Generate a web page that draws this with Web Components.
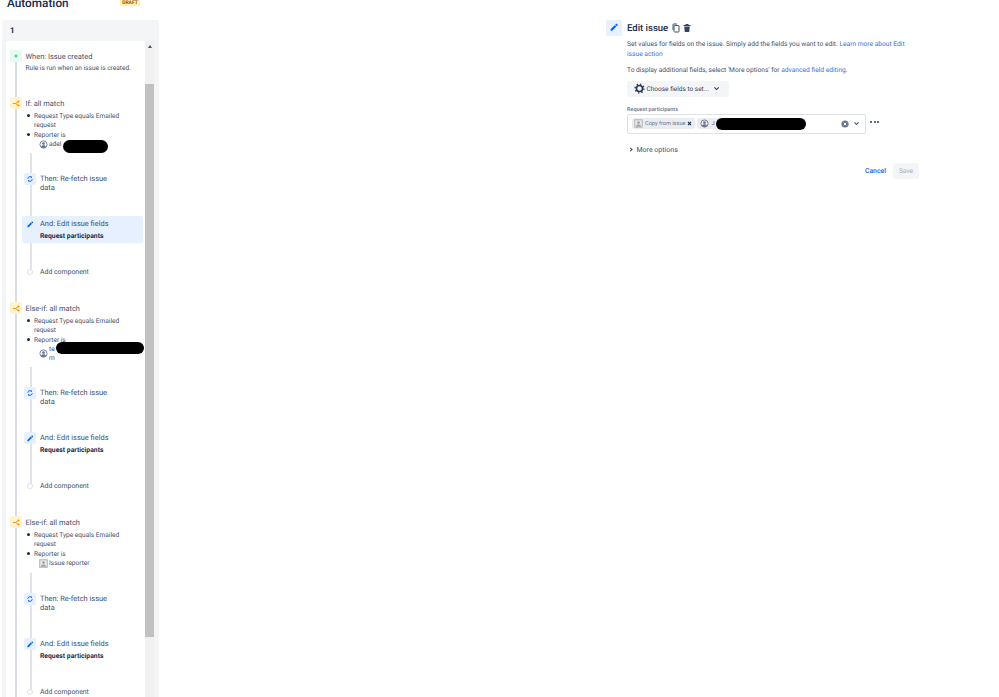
<!DOCTYPE html>
<html>
<head>
<meta charset="utf-8">
<title>Automation</title>
<style>
  html, body { margin: 0; height: 100%; overflow: hidden; background: #fff; }
  body { font-family: Roboto, "Noto Sans", sans-serif; color: #42526e; text-rendering: geometricPrecision; }
</style>
</head>
<body>
<automation-app>
  <rule-panel slot="rule">
    <rule-step kind="trigger" title="When: Issue created" h="47">Rule is run when an issue is created.</rule-step>
    <rule-step kind="branch" title="If: all match" h="62">
      <rule-cond>Request Type equals Emailed request</rule-cond>
      <rule-cond>Reporter is<rule-user>adel</rule-user><black-out style="left:37px;top:9px;width:45px;height:13px"></black-out></rule-cond>
    </rule-step>
    <rule-block>
      <rule-action kind="refetch" title="Then: Re-fetch issue data"></rule-action>
      <rule-action kind="edit" selected title="And: Edit issue fields">Request participants</rule-action>
      <rule-add></rule-add>
    </rule-block>
    <rule-step kind="branch" title="Else-if: all match" h="71">
      <rule-cond>Request Type equals Emailed request</rule-cond>
      <rule-cond>Reporter is<rule-user>te<br>m</rule-user><black-out style="left:30px;top:6px;width:88px;height:12px"></black-out></rule-cond>
    </rule-step>
    <rule-block>
      <rule-action kind="refetch" title="Then: Re-fetch issue data"></rule-action>
      <rule-action kind="edit" title="And: Edit issue fields">Request participants</rule-action>
      <rule-add></rule-add>
    </rule-block>
    <rule-step kind="branch" title="Else-if: all match" h="63">
      <rule-cond>Request Type equals Emailed request</rule-cond>
      <rule-cond>Reporter is<rule-user field>Issue reporter</rule-user></rule-cond>
    </rule-step>
    <rule-block>
      <rule-action kind="refetch" title="Then: Re-fetch issue data"></rule-action>
      <rule-action kind="edit" title="And: Edit issue fields">Request participants</rule-action>
      <rule-add></rule-add>
    </rule-block>
  </rule-panel>
  <edit-form slot="form"></edit-form>
</automation-app>

<script>
// icons used in more than one element
const ICONS = {
  pencil: '<path d="M3 13.2V16h2.8l7.6-7.6-2.8-2.8L3 13.2zM14.3 7.5l1.3-1.3a1 1 0 0 0 0-1.4l-1.4-1.4a1 1 0 0 0-1.4 0l-1.3 1.3 2.8 2.8z" fill="currentColor"/>',
  refetch: '<path d="M4.5 9.5a5.5 5.5 0 0 1 9-4.2M15.5 10.5a5.5 5.5 0 0 1-9 4.2" fill="none" stroke="currentColor" stroke-width="2.4"/><path d="M15 2.500v4.500h-4.500zM5 17.500V13h4.500z" fill="currentColor"/>',
  branch: '<path d="M2 10h6M8 10l5-4M8 10l5 4" fill="none" stroke="currentColor" stroke-width="2.200"/><circle cx="14.500" cy="5.600" r="2.200" fill="currentColor"/><circle cx="14.500" cy="14.400" r="2.200" fill="currentColor"/>',
  plus: '<path d="M10 5v10M5 10h10" stroke="currentColor" stroke-width="3.500" fill="none"/>',
  user: '<circle cx="10" cy="10" r="8" fill="none" stroke="currentColor" stroke-width="2"/><circle cx="10" cy="8" r="3" fill="currentColor"/><path d="M4.5 15.5c1-3 3-3.800 5.500-3.800s4.500.8 5.500 3.800a8 8 0 0 1-11 0z" fill="currentColor"/>',
  portrait: '<rect width="20" height="20" rx="2" fill="#c4c4c4"/><rect x="3" y="3" width="14" height="14" fill="#e8e8e8"/><circle cx="10" cy="8" r="3" fill="#a5a5a5"/><path d="M4 17c.5-4 3-5 6-5s5.500 1 6 5z" fill="#a5a5a5"/>'
};
const svg = (name, size) => `<svg viewBox="0 0 20 20" width="${size}" height="${size}">${ICONS[name]}</svg>`;

class AutomationApp extends HTMLElement {
  constructor() {
    super();
    this.attachShadow({ mode: 'open' }).innerHTML = `
      <style>
        :host { display: grid; grid-template-columns: 159px 1fr; height: 697px; overflow: hidden; }
        header { height: 20px; padding-left: 7px; display: flex; justify-content: space-between; width: 133px; }
        h1 { margin: -7px 0 0; font-size: 11.800px; line-height: 20px; font-weight: 500; color: #172b4d; }
        .draft { width: 20px; height: 6px; background: #fff0b3; color: #974f0c; text-align: center; font: 700 5px/6px Roboto, sans-serif; }
        .right { padding: 19px 0 0 447px; }
      </style>
      <div>
        <header><h1>Automation</h1><span class="draft">DRAFT</span></header>
        <slot name="rule"></slot>
      </div>
      <div class="right"><slot name="form"></slot></div>`;
  }
}

class RulePanel extends HTMLElement {
  constructor() {
    super();
    this.attachShadow({ mode: 'open' }).innerHTML = `
      <style>
        :host { display: block; margin-left: 2px; width: 157px; height: 677px; background: #f4f5f7; border-radius: 3px 3px 0 0; overflow: hidden; }
        .num { height: 21px; padding: 3px 0 0 8px; box-sizing: border-box; font: 700 8px/15px Roboto, sans-serif; color: #172b4d; }
        .box { margin-left: 4px; width: 148px; height: 656px; background: #fff; display: grid; grid-template-columns: minmax(0, 1fr) 9px; overflow: hidden; }
        .list { padding-top: 9px; height: 900px; background: linear-gradient(#d9dce1, #d9dce1) no-repeat 9px 20px / 2px 100%; }
        .bar { background: #f1f1f1; display: flex; flex-direction: column; }
        .bar i { height: 43px; width: 100%; flex: none; display: flex; justify-content: center; padding-top: 4px; box-sizing: border-box; }
        .bar i::before { content: ""; border: 2.500px solid transparent; border-top: 0; border-bottom: 3px solid #505050; height: 0; }
        .bar b { width: 100%; height: 553px; flex: none; background: #c1c1c1; }
      </style>
      <div class="num">1</div>
      <div class="box">
        <div class="list"><slot></slot></div>
        <div class="bar"><i></i><b></b></div>
      </div>`;
  }
}

// top level step of the rule: coloured icon, title, then its detail
class RuleStep extends HTMLElement {
  constructor() {
    super();
    this.attachShadow({ mode: 'open' });
  }
  connectedCallback() {
    const trigger = this.getAttribute('kind') === 'trigger';
    this.shadowRoot.innerHTML = `
      <style>
        :host { display: block; height: ${this.getAttribute('h')}px; }
        .head { display: flex; align-items: center; gap: 3.500px; height: 12px; padding-left: 4px; font-size: 7.450px; color: #42526e; white-space: nowrap; }
        .ic { width: 12px; height: 12px; border-radius: 2px; display: grid; place-items: center; background: ${trigger ? '#e3fcef' : '#fff4d1'}; color: ${trigger ? '#36b37e' : '#ff8b00'}; }
        .ic svg { display: block; }
        .body { padding: ${trigger ? '2px' : '2.500px'} 0 0 19.500px; font-size: 6.550px; line-height: 9px; color: #42526e; white-space: nowrap; }
      </style>
      <div class="head"><span class="ic">${svg(trigger ? 'plus' : 'branch', trigger ? 6 : 9)}</span><span>${this.getAttribute('title')}</span></div>
      <div class="body"><slot></slot></div>`;
  }
}

class RuleCond extends HTMLElement {
  constructor() {
    super();
    this.attachShadow({ mode: 'open' }).innerHTML = `
      <style>
        :host { display: block; position: relative; width: 92px; padding-left: 8.500px; margin-bottom: 1px; line-height: 9px; white-space: normal; }
        :host::before { content: ""; position: absolute; left: 1.500px; top: 2.500px; width: 3px; height: 3px; border-radius: 50%; background: #172b4d; }
      </style>
      <slot></slot>`;
  }
}

class RuleUser extends HTMLElement {
  constructor() {
    super();
    this.attachShadow({ mode: 'open' });
  }
  connectedCallback() {
    const icon = this.hasAttribute('field') ? svg('portrait', 9) : svg('user', 9);
    this.shadowRoot.innerHTML = `
      <style>
        :host { display: flex; align-items: center; gap: 1.500px; padding-left: 4.500px; }
        svg { display: block; color: #6b778c; flex: none; }
      </style>
      ${icon}<span><slot></slot></span>`;
  }
}

// redaction scribble lying over the text
class BlackOut extends HTMLElement {
  constructor() {
    super();
    this.attachShadow({ mode: 'open' }).innerHTML = `
      <style>:host { display: block; position: absolute; background: #000; border-radius: 7px; }</style>`;
  }
}

class RuleBlock extends HTMLElement {
  constructor() {
    super();
    this.attachShadow({ mode: 'open' }).innerHTML = `
      <style>
        :host { display: block; width: 123px; margin-top: -6px; padding: 6px 0 26px 16px; background: linear-gradient(#e1e3e8, #e1e3e8) no-repeat 24px 0 / 2px calc(100% - 30px); }
      </style>
      <slot></slot>`;
  }
}

class RuleAction extends HTMLElement {
  constructor() {
    super();
    this.attachShadow({ mode: 'open' });
  }
  connectedCallback() {
    const selected = this.hasAttribute('selected');
    const edit = this.getAttribute('kind') === 'edit';
    this.shadowRoot.innerHTML = `
      <style>
        :host { display: block; height: ${edit ? 27 : 31}px; margin-bottom: ${edit ? 24 : 14}px; margin-top: ${edit ? 0 : 12}px; }
        .row { display: flex; gap: 4px; height: 100%; width: 121px; padding: 2px 0 0 2px; box-sizing: border-box; border-radius: 2px; background: ${selected ? '#e6f0ff' : 'transparent'}; }
        .ic { width: 12px; height: 12px; border-radius: 2px; flex: none; display: grid; place-items: center; background: ${selected ? 'transparent' : '#e6f0ff'}; color: #0065ff; }
        .title { font-size: 7.450px; line-height: 9px; color: #42526e; width: 76px; padding-top: 1px; white-space: ${edit ? 'nowrap' : 'normal'}; }
        .sub { font-size: 6.800px; line-height: 9px; margin-top: 4px; font-weight: 700; color: #172b4d; white-space: nowrap; }
      </style>
      <div class="row">
        <span class="ic">${svg(edit ? 'pencil' : 'refetch', edit ? 9 : 8)}</span>
        <div><div class="title">${this.getAttribute('title')}</div>${edit ? '<div class="sub"><slot></slot></div>' : ''}</div>
      </div>`;
  }
}

class RuleAdd extends HTMLElement {
  constructor() {
    super();
    this.attachShadow({ mode: 'open' }).innerHTML = `
      <style>
        :host { display: flex; align-items: center; gap: 7px; height: 9px; padding-left: 5px; font-size: 6.900px; color: #42526e; white-space: nowrap; }
        i { width: 4px; height: 4px; border: 1px solid #dfe1e6; border-radius: 50%; background: #fff; }
      </style>
      <i></i><span>Add component</span>`;
  }
}

class EditForm extends HTMLElement {
  constructor() {
    super();
    this.attachShadow({ mode: 'open' }).innerHTML = `
      <style>
        :host { display: block; width: 320px; font-size: 6.660px; color: #42526e; }
        a { color: #3b73db; text-decoration: none; }
        .head { display: flex; align-items: center; height: 17px; }
        .pen { width: 16px; height: 16px; border-radius: 2px; background: #e6f0ff; color: #0065ff; display: grid; place-items: center; margin-right: 5px; }
        h2 { margin: 1px 3px 0 0; font-size: 9.500px; font-weight: 500; color: #172b4d; }
        .head svg { display: block; }
        .content { padding-left: 21px; }
        p { margin: 0; line-height: 9.500px; white-space: nowrap; }
        .p1 { margin-top: 4px; }
        .p2 { margin-top: 6.500px; }
        .choose { margin-top: 6px; width: 102px; height: 15.500px; border-radius: 2px; background: #f4f5f7; display: flex; align-items: center; gap: 2px; padding-left: 6.500px; box-sizing: border-box; color: #344563; font-size: 6.500px; white-space: nowrap; }
        .label { margin-top: 8px; height: 9px; padding-top: 1px; box-sizing: border-box; font-size: 5.500px; line-height: 8px; color: #6b778c; font-weight: 500; }
        .row { margin-top: 0; display: flex; gap: 4px; align-items: flex-start; }
        .field { position: relative; width: 239px; height: 20px; box-sizing: border-box; border: 1px solid #dfe1e6; border-radius: 2px; padding: 0 4px; display: flex; align-items: center; gap: 2px; }
        .tag { height: 11px; background: #ebecf0; border-radius: 2px; display: flex; align-items: center; gap: 2px; padding: 0 3px 0 2px; font-size: 5.600px; color: #6b778c; white-space: nowrap; }
        .tag svg { display: block; color: #6b778c; }
        .user { width: 109px; box-sizing: border-box; padding-left: 3px; color: #42526e; }
        .scribble { position: absolute; left: 88px; top: 3px; width: 90px; height: 12px; background: #000; border-radius: 7px; }
        .tools { margin-left: auto; display: flex; align-items: center; gap: 4px; padding-right: 1px; }
        .tools svg { display: block; }
        .dots { display: flex; gap: 1.500px; margin-top: 7px; }
        .dots i { width: 2px; height: 2px; border-radius: 50%; background: #253858; }
        .more { margin-top: 11px; height: 10px; display: flex; align-items: center; gap: 5px; padding-left: 1.500px; color: #42526e; font-size: 7px; }
        .more i { width: 2px; height: 2px; border: solid #253858; border-width: 1px 1px 0 0; transform: rotate(45deg); }
        .foot { margin-top: 8px; width: 292px; display: flex; justify-content: flex-end; align-items: center; gap: 7px; }
        .save { width: 26px; height: 16px; background: #f4f5f7; color: #a5adba; border-radius: 2px; display: grid; place-items: center; }
        .cancel { color: #1f62dc; font-weight: 500; font-size: 6.900px; }
      </style>
      <div class="head">
        <span class="pen">${svg('pencil', 11)}</span>
        <h2>Edit issue</h2>
        <svg viewBox="0 0 20 20" width="10" height="10" style="margin-right:1px"><path d="M7 5h8a1 1 0 0 1 1 1v11a1 1 0 0 1-1 1H7a1 1 0 0 1-1-1V6a1 1 0 0 1 1-1zM4 14V3a1 1 0 0 1 1-1h7" fill="none" stroke="#42526e" stroke-width="2"/></svg>
        <svg viewBox="0 0 20 20" width="10" height="10"><path d="M3 4h14v2H3zM7 2h6v2H7zM4.500 7h11l-1 11h-9z" fill="#344563"/></svg>
      </div>
      <div class="content">
        <p class="p1">Set values for fields on the issue. Simply add the fields you want to edit. <a>Learn more about Edit</a><br><a>issue action</a></p>
        <p class="p2">To display additional fields, select 'More options' for <a>advanced field editing</a>.</p>
        <div class="choose">
          <svg viewBox="0 0 20 20" width="11" height="11"><circle cx="10" cy="10" r="5.500" fill="none" stroke="#253858" stroke-width="3"/><circle cx="10" cy="10" r="8" fill="none" stroke="#253858" stroke-width="2.500" stroke-dasharray="2.500 3.780"/></svg>
          <span>Choose fields to set...</span>
          <svg viewBox="0 0 10 10" width="7" height="7" style="margin-left:2px"><path d="M2 3.500l3 3 3-3" fill="none" stroke="#253858" stroke-width="1.500"/></svg>
        </div>
        <div class="label">Request participants</div>
        <div class="row">
          <div class="field">
            <span class="tag">${svg('portrait', 9)}Copy from issue<svg viewBox="0 0 10 10" width="5" height="5"><path d="M2 2l6 6M8 2l-6 6" stroke="#253858" stroke-width="2.200"/></svg></span>
            <span class="tag user">${svg('user', 9)}J</span>
            <span class="scribble"></span>
            <span class="tools">
              <svg viewBox="0 0 20 20" width="8" height="8"><circle cx="10" cy="10" r="9" fill="#6b778c"/><path d="M7 7l6 6M13 7l-6 6" stroke="#fff" stroke-width="2.500"/></svg>
              <svg viewBox="0 0 10 10" width="7" height="7"><path d="M2 3.500l3 3 3-3" fill="none" stroke="#42526e" stroke-width="1.500"/></svg>
            </span>
          </div>
          <span class="dots"><i></i><i></i><i></i></span>
        </div>
        <div class="more"><i></i><span>More options</span></div>
        <div class="foot"><span class="cancel">Cancel</span><span class="save">Save</span></div>
      </div>`;
  }
}

customElements.define('automation-app', AutomationApp);
customElements.define('rule-panel', RulePanel);
customElements.define('rule-step', RuleStep);
customElements.define('rule-cond', RuleCond);
customElements.define('rule-user', RuleUser);
customElements.define('black-out', BlackOut);
customElements.define('rule-block', RuleBlock);
customElements.define('rule-action', RuleAction);
customElements.define('rule-add', RuleAdd);
customElements.define('edit-form', EditForm);
</script>
</body>
</html>
